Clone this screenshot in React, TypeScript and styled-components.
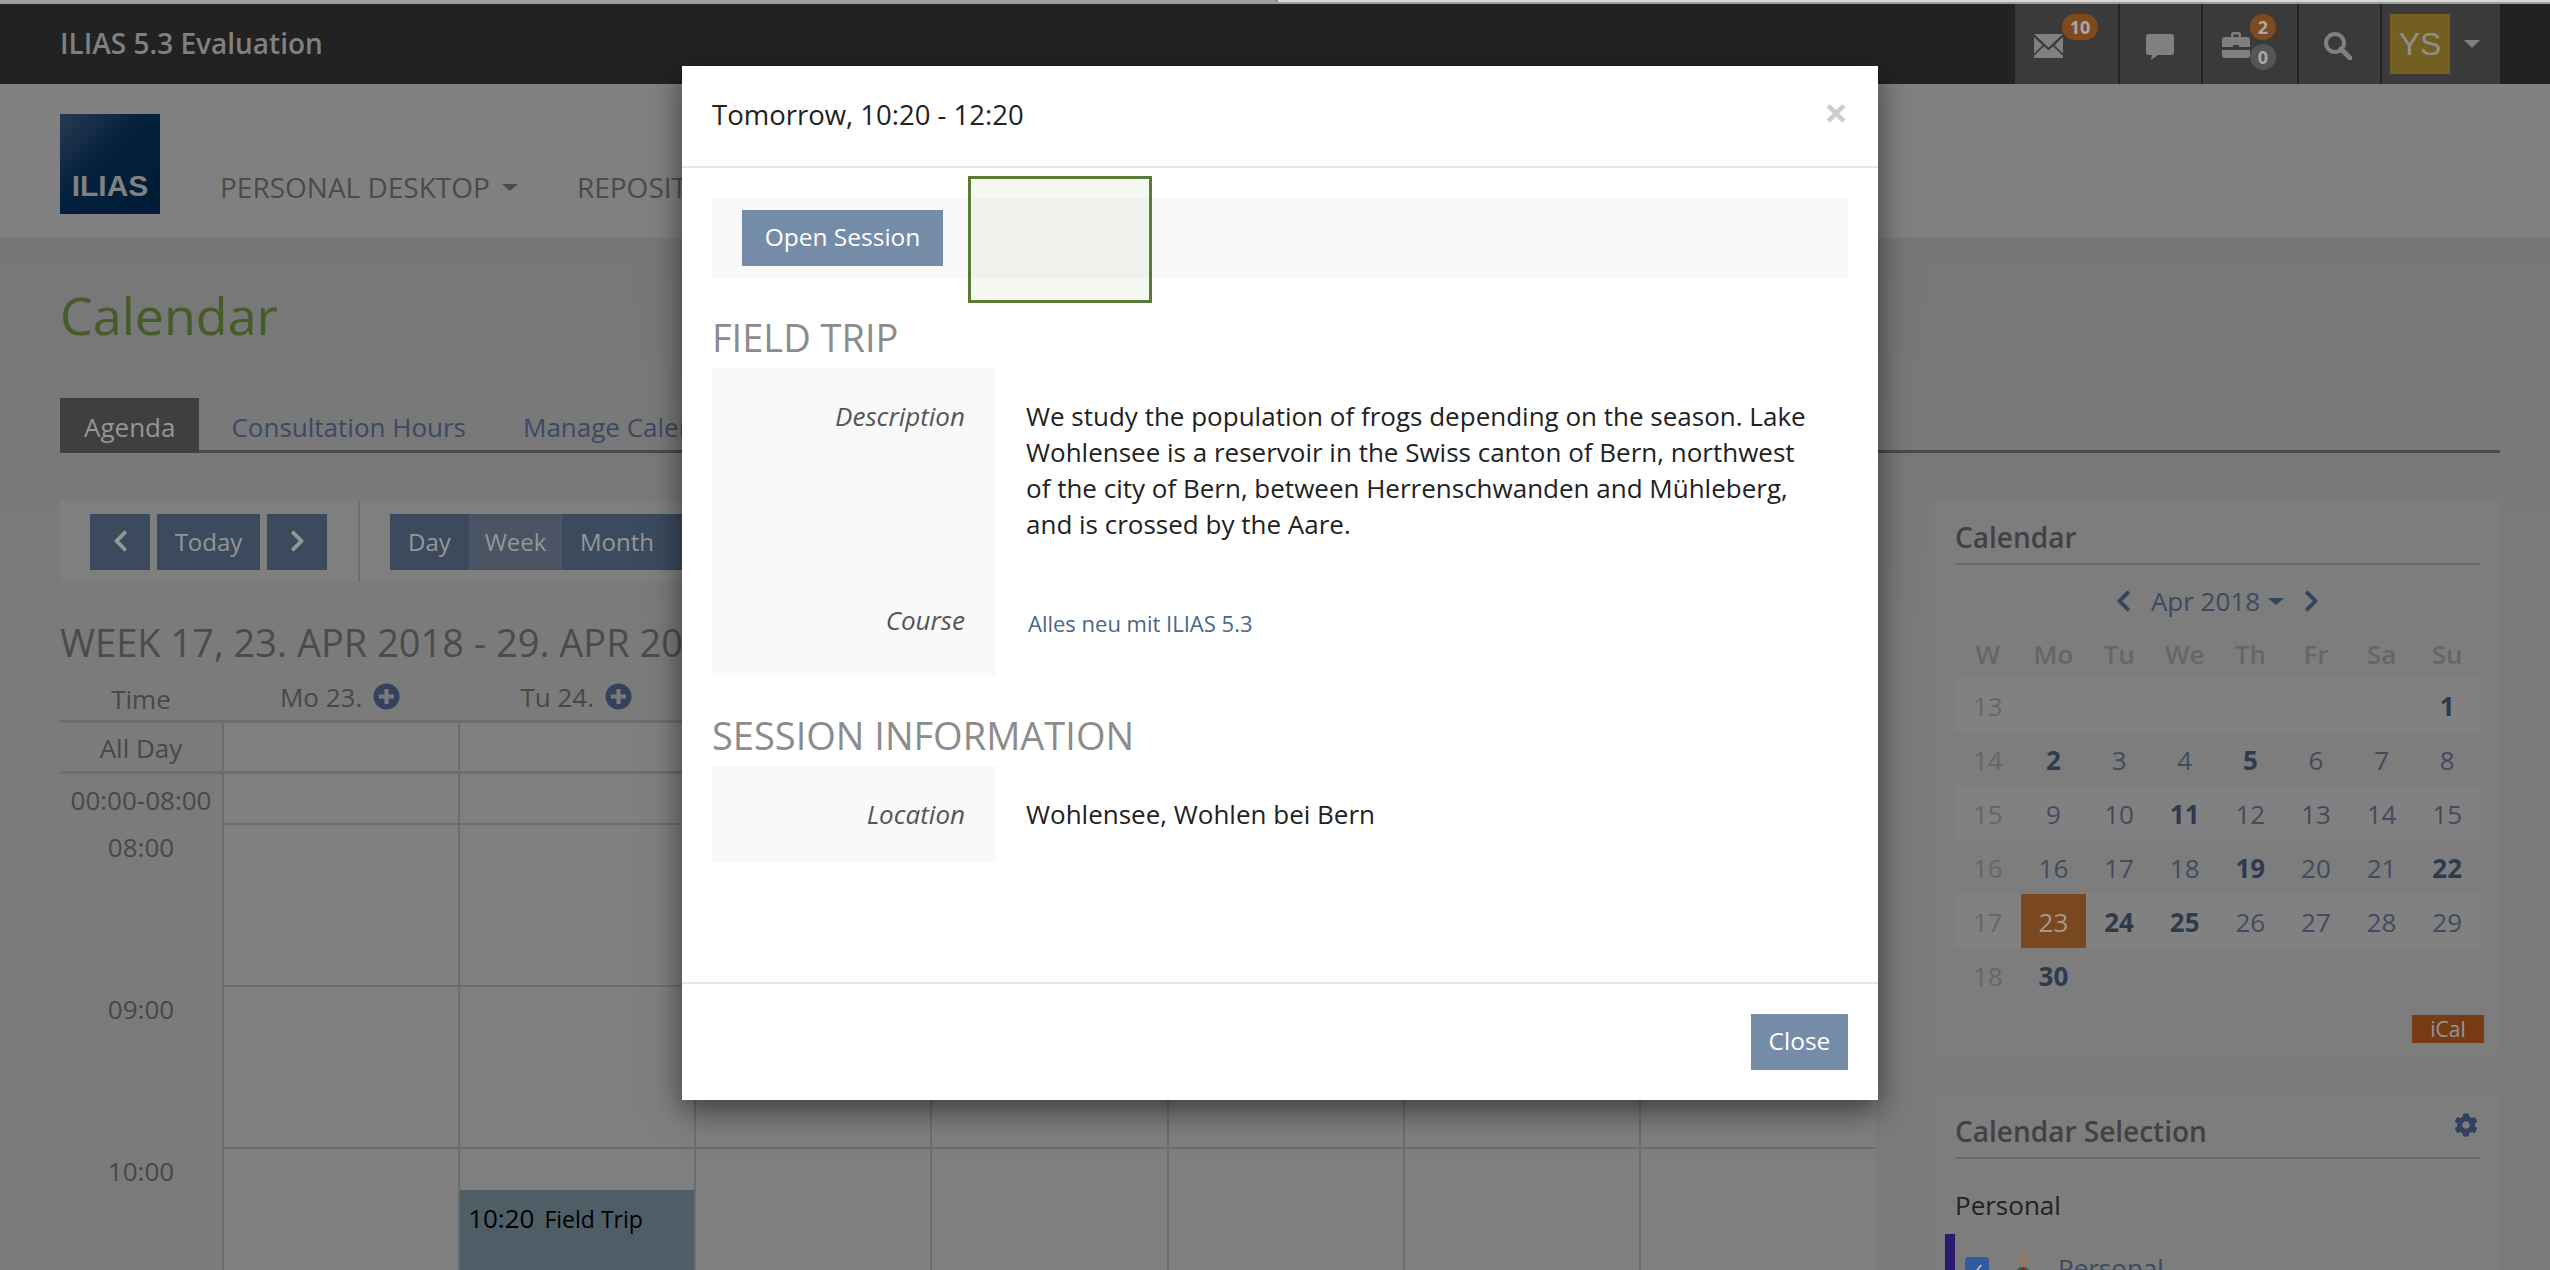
import styled, { createGlobalStyle } from "styled-components";
import { FaChevronLeft, FaChevronRight, FaCog, FaPlusCircle } from "react-icons/fa";

const GlobalStyle = createGlobalStyle`
  html, body {
    margin: 0;
    padding: 0;
    height: 1270px;
    overflow: hidden;
    background: #797979;
    font-family: "Open Sans", sans-serif;
    font-size: 26px;
    color: #444;
  }
  * { box-sizing: border-box; }
`;

const ChromeStrip = styled.div`
  display: flex;
  height: 4px;
  background: #a0a0a0;
  border-bottom: 2px solid #9c9c9c;
`;

const ChromeTab = styled.div`
  width: 1278px;
  border-right: 2px solid #8a8a8a;
`;

const ChromeRest = styled.div`
  flex: 1;
  background: #d8d8d8;
`;

const TopBar = styled.header`
  display: flex;
  justify-content: space-between;
  height: 80px;
  padding: 0 50px 0 60px;
  background: #222;
`;

const Brand = styled.div`
  font-size: 28px;
  font-weight: 600;
  line-height: 78px;
  color: #808080;
`;

const ToolGroup = styled.div`
  display: flex;
  background: #3a3a3a;
`;

const Tool = styled.div<{ $w: number }>`
  position: relative;
  display: flex;
  align-items: flex-start;
  justify-content: flex-start;
  width: ${(p) => p.$w}px;
  border-right: 2px solid #222;
  &:last-child {
    border-right: 0;
  }
`;

const ToolIcon = styled.svg<{ $x: number; $y: number }>`
  display: block;
  margin: ${(p) => p.$y}px 0 0 ${(p) => p.$x}px;
  fill: #808080;
`;

const Badge = styled.span<{ $x: number; $y: number; $w: number; $grey?: boolean }>`
  position: absolute;
  left: ${(p) => p.$x}px;
  top: ${(p) => p.$y}px;
  width: ${(p) => p.$w}px;
  height: 26px;
  border-radius: 13px;
  background: ${(p) => (p.$grey ? "#555" : "#7f4a20")};
  color: #a8a8a8;
  font-size: 18px;
  font-weight: 700;
  line-height: 26px;
  text-align: center;
`;

const Avatar = styled.div`
  width: 60px;
  height: 60px;
  margin: 10px 0 0 8px;
  background: #736020;
  color: #8f8f8f;
  font-family: "Liberation Sans", sans-serif;
  font-size: 32px;
  line-height: 60px;
  text-align: center;
`;

const AvatarCaret = styled.span`
  width: 0;
  height: 0;
  margin: 36px 0 0 14px;
  border-left: 8px solid transparent;
  border-right: 8px solid transparent;
  border-top: 8px solid #808080;
`;

const NavBar = styled.nav`
  display: flex;
  align-items: flex-start;
  height: 154px;
  padding: 30px 0 0 60px;
  background: #808080;
`;

const Logo = styled.div`
  display: flex;
  align-items: flex-end;
  justify-content: center;
  width: 100px;
  height: 100px;
  padding-bottom: 10px;
  background: linear-gradient(135deg, #283a52 0%, #03203c 45%, #001c36 100%);
  color: #808080;
  font-family: "Liberation Sans", sans-serif;
  font-size: 30px;
  font-weight: 700;
  line-height: 36px;
`;

const NavItem = styled.div`
  display: flex;
  align-items: center;
  margin: 54px 0 0 60px;
  color: #4b4b4b;
  font-size: 28px;
  line-height: 38px;
  white-space: nowrap;
  & + & {
    margin-left: 59px;
  }
`;

const Caret = styled.span<{ $color?: string }>`
  display: inline-block;
  width: 0;
  height: 0;
  margin-left: 12px;
  border-left: 8px solid transparent;
  border-right: 8px solid transparent;
  border-top: 7px solid ${(p) => p.$color || "#4b4b4b"};
`;

const Content = styled.main`
  height: 1032px;
  padding: 0 50px 0 60px;
  overflow: hidden;
  background: linear-gradient(#777 0, #7b7b7b 400px);
`;

const PageTitle = styled.h1`
  margin: 0;
  padding: 41px 0 47px;
  color: #465a2a;
  font-size: 52px;
  font-weight: 400;
  line-height: 72px;
`;

const Tabs = styled.div`
  display: flex;
  height: 55px;
  border-bottom: 3px solid #4a4a4a;
`;

const TabItem = styled.div<{ $active?: boolean }>`
  height: 55px;
  padding: ${(p) => (p.$active ? "0 24px" : "0 25px 0 32px")};
  background: ${(p) => (p.$active ? "#3f3f3f" : "transparent")};
  color: ${(p) => (p.$active ? "#969696" : "#3b4a62")};
  line-height: 58px;
  white-space: nowrap;
`;

const Columns = styled.div`
  display: flex;
  gap: 60px;
  margin-top: 48px;
`;

const LeftColumn = styled.div`
  width: 1815px;
  flex: none;
`;

const Toolbar = styled.div`
  display: flex;
  height: 81px;
  background: #7f7f7f;
`;

const ToolbarGroup = styled.div<{ $gap: number; $w?: number }>`
  display: flex;
  gap: ${(p) => p.$gap}px;
  width: ${(p) => (p.$w ? `${p.$w}px` : "auto")};
  padding: 13px 30px;
  & + & {
    border-left: 2px solid #6f6f6f;
  }
`;

const DimButton = styled.div<{ $w: number; $active?: boolean }>`
  display: flex;
  align-items: center;
  justify-content: center;
  width: ${(p) => p.$w}px;
  height: 56px;
  padding-bottom: 2px;
  background: ${(p) => (p.$active ? "#4a5464" : "#3c4a5e")};
  color: #969696;
  font-size: 24px;
  svg {
    width: 15px;
    height: 24px;
  }
`;

const WeekTitle = styled.h2`
  margin: 35px 0 0;
  color: #4b4b4b;
  font-size: 38px;
  font-weight: 400;
  line-height: 50px;
  white-space: nowrap;
`;

const WeekRow = styled.div<{ $h: number }>`
  display: grid;
  grid-template-columns: 162px repeat(7, 1fr);
  height: ${(p) => p.$h}px;
`;

const TimeCell = styled.div<{ $line?: number; $top?: number }>`
  padding-top: ${(p) => p.$top || 0}px;
  border-bottom: ${(p) => p.$line || 0}px solid #6d6d6d;
  color: #484848;
  line-height: 36px;
  text-align: center;
`;

const DayHead = styled(TimeCell)`
  display: flex;
  justify-content: center;
  gap: 11px;
  color: #484848;
  svg {
    width: 27px;
    height: 27px;
    margin-top: 4px;
    color: #33435c;
  }
`;

const DayCell = styled.div<{ $line?: number }>`
  border-left: 2px solid #6d6d6d;
  border-bottom: ${(p) => p.$line || 0}px solid #6d6d6d;
  background: #7f7f7f;
`;

const CalEvent = styled.div`
  display: flex;
  align-items: baseline;
  gap: 10px;
  height: 80px;
  margin-top: 41px;
  padding: 10px 8px;
  background: #4f5d66;
  color: #000;
  font-size: 26px;
  line-height: 36px;
  span {
    font-size: 23px;
  }
`;

const SideColumn = styled.aside`
  flex: 1;
  padding-top: 1px;
`;

const SidePanel = styled.section<{ $h: number }>`
  height: ${(p) => p.$h}px;
  margin-bottom: 41px;
  padding: 11px 20px 0;
  background: #7d7d7d;
`;

const SideHeading = styled.div`
  position: relative;
  height: 52px;
  border-bottom: 2px solid #6a6a6a;
  color: #424242;
  font-size: 28px;
  font-weight: 600;
  line-height: 48px;
  svg {
    position: absolute;
    right: 2px;
    top: 6px;
    width: 24px;
    height: 24px;
    color: #2f4060;
  }
`;

const MonthNav = styled.div`
  display: flex;
  align-items: center;
  justify-content: center;
  gap: 20px;
  height: 72px;
  color: #3b4a62;
  svg {
    width: 15px;
    height: 24px;
    color: #33435c;
  }
`;

const MonthLabel = styled.span`
  display: flex;
  align-items: center;
  span {
    margin-left: 8px;
    border-top-color: #33435c;
  }
`;

const MonthGrid = styled.div`
  display: grid;
  grid-template-columns: repeat(8, 1fr);
  text-align: center;
`;

const WeekdayCell = styled.div`
  height: 42px;
  margin-top: -1px;
  color: #666;
  font-weight: 600;
  line-height: 36px;
`;

const DateCell = styled.div<{ $stripe?: boolean; $week?: boolean; $bold?: boolean; $today?: boolean }>`
  height: 54px;
  background: ${(p) => (p.$today ? "#7a4820" : p.$stripe ? "#818181" : "transparent")};
  color: ${(p) => (p.$today ? "#a8978a" : p.$week ? "#666" : p.$bold ? "#2e3a4e" : "#414c5e")};
  font-weight: ${(p) => (p.$bold ? 700 : 400)};
  line-height: 56px;
`;

const ICalRow = styled.div`
  display: flex;
  justify-content: flex-end;
  margin: 13px -4px 0 0;
`;

const ICalButton = styled.div`
  width: 72px;
  height: 28px;
  background: #773c15;
  color: #969696;
  font-size: 21px;
  line-height: 28px;
  text-align: center;
`;

const GroupTitle = styled.div`
  margin-top: 28px;
  color: #222;
  line-height: 36px;
`;

const SelectionRow = styled.div`
  display: flex;
  align-items: flex-start;
  height: 60px;
  margin: 11px 0 0 -10px;
  border-left: 10px solid #2b1a6e;
  padding: 23px 0 0 10px;
`;

const CheckBox = styled.span`
  display: flex;
  align-items: center;
  justify-content: center;
  width: 24px;
  height: 24px;
  border-radius: 4px;
  background: #2f5c9e;
  color: #c8c8c8;
  font-size: 18px;
`;

const PersonIcon = styled.svg`
  margin-left: 22px;
  margin-top: -4px;
`;

const SelectionLabel = styled.span`
  margin: -7px 0 0 23px;
  color: #3b4a62;
`;

const Modal = styled.div`
  position: absolute;
  left: 682px;
  top: 66px;
  display: flex;
  flex-direction: column;
  width: 1196px;
  height: 1034px;
  background: #fff;
  color: #222;
  box-shadow: 0 10px 30px rgba(0, 0, 0, 0.55);
`;

const ModalHeader = styled.div`
  display: flex;
  justify-content: space-between;
  height: 102px;
  padding: 30px 30px 0;
  border-bottom: 2px solid #e5e5e5;
  font-size: 27.500px;
  line-height: 38px;
`;

const CloseX = styled.span`
  margin-top: -9px;
  color: #ccc;
  font-size: 42px;
  font-weight: 700;
  line-height: 50px;
`;

const ModalBody = styled.div`
  flex: 1;
  padding: 30px 30px 0;
`;

const ActionBar = styled.div`
  position: relative;
  height: 80px;
  padding: 12px 30px;
  background: #f9f9f9;
`;

const PrimaryButton = styled.button<{ $w: number }>`
  display: block;
  width: ${(p) => p.$w}px;
  height: 56px;
  padding: 0 0 4px;
  border: 0;
  background: #758ca9;
  color: #fff;
  font-family: inherit;
  font-size: 24.500px;
`;

const Highlight = styled.div`
  position: absolute;
  left: 256px;
  top: -22px;
  width: 184px;
  height: 127px;
  border: 3px solid #5a7a37;
  background: rgba(110, 170, 70, 0.08);
`;

const SectionTitle = styled.h3<{ $top?: number }>`
  margin: 0;
  padding: ${(p) => p.$top || 35}px 0 7px;
  color: #8c8c8c;
  font-size: 38px;
  font-weight: 400;
  line-height: 48px;
`;

const PropRow = styled.div<{ $h: number }>`
  display: grid;
  grid-template-columns: 284px 1fr;
  min-height: ${(p) => p.$h}px;
`;

const PropLabel = styled.div`
  padding: 30px 31px 0 0;
  background: #f9f9f9;
  color: #555;
  font-size: 26px;
  font-style: italic;
  line-height: 36px;
  text-align: right;
`;

const PropValue = styled.div`
  padding: 30px 30px 0;
  font-size: 26px;
  line-height: 36px;
`;

const PropLink = styled.a`
  display: inline-block;
  margin: 3px 0 0 2px;
  color: #4c6586;
  font-size: 22px;
`;

const ModalFooter = styled.div`
  display: flex;
  justify-content: flex-end;
  height: 118px;
  padding: 30px 30px 0;
  border-top: 2px solid #e5e5e5;
`;

const DAY_HEADS = ["Mo 23.", "Tu 24.", "We 25.", "Th 26.", "Fr 27.", "Sa 28.", "Su 29."];
const DAYS = [0, 1, 2, 3, 4, 5, 6];
const WEEKDAYS = ["W", "Mo", "Tu", "We", "Th", "Fr", "Sa", "Su"];
const MONTH = [
  ["13", "", "", "", "", "", "", "1"],
  ["14", "2", "3", "4", "5", "6", "7", "8"],
  ["15", "9", "10", "11", "12", "13", "14", "15"],
  ["16", "16", "17", "18", "19", "20", "21", "22"],
  ["17", "23", "24", "25", "26", "27", "28", "29"],
  ["18", "30", "", "", "", "", "", ""],
];
const BOLD_DAYS = ["1", "2", "5", "11", "19", "22", "24", "25", "30"];

const EnvelopeIcon = () => (
  <ToolIcon $x={19} $y={30} width="29" height="24" viewBox="0 0 29 24">
    <path d="M0 0h29L14.5 13.5 11 10.2z" />
    <path d="M0 3l8.5 8.3L0 19.5z" />
    <path d="M29 3l-8.5 8.3L29 19.5z" />
    <path d="M0 24v-2.300l10-9.500 4.500 4.300 4.500-4.300 10 9.500V24z" />
  </ToolIcon>
);

const CommentIcon = () => (
  <ToolIcon $x={26} $y={30} width="28" height="26" viewBox="0 0 28 26">
    <path d="M3 0h22a3 3 0 0 1 3 3v15a3 3 0 0 1-3 3H12l-7 5 1-5H3a3 3 0 0 1-3-3V3a3 3 0 0 1 3-3z" />
  </ToolIcon>
);

const BriefcaseIcon = () => (
  <ToolIcon $x={19} $y={28} width="28" height="26" viewBox="0 0 28 26">
    <path d="M9 5V2.500A2.500 2.500 0 0 1 11.500 0h5A2.500 2.500 0 0 1 19 2.500V5h6a3 3 0 0 1 3 3v7H17v-2h-6v2H0V8a3 3 0 0 1 3-3zm2.500 0h5V2.500h-5z" />
    <path d="M0 18h28v5a3 3 0 0 1-3 3H3a3 3 0 0 1-3-3z" />
  </ToolIcon>
);

const SearchIcon = () => (
  <ToolIcon $x={25} $y={28} width="28" height="28" viewBox="0 0 28 28">
    <circle cx="11" cy="11" r="9" fill="none" stroke="#808080" strokeWidth="4" />
    <path d="M17 17l9 9" stroke="#808080" strokeWidth="5" strokeLinecap="round" />
  </ToolIcon>
);

const App = () => {
  return (
    <>
      <GlobalStyle />
      <ChromeStrip>
        <ChromeTab />
        <ChromeRest />
      </ChromeStrip>
      <TopBar>
        <Brand>ILIAS 5.3 Evaluation</Brand>
        <ToolGroup>
          <Tool $w={105}>
            <EnvelopeIcon />
            <Badge $x={47} $y={10} $w={36}>10</Badge>
          </Tool>
          <Tool $w={83}>
            <CommentIcon />
          </Tool>
          <Tool $w={96}>
            <BriefcaseIcon />
            <Badge $x={47} $y={10} $w={26}>2</Badge>
            <Badge $x={47} $y={40} $w={26} $grey>0</Badge>
          </Tool>
          <Tool $w={83}>
            <SearchIcon />
          </Tool>
          <Tool $w={118}>
            <Avatar>YS</Avatar>
            <AvatarCaret />
          </Tool>
        </ToolGroup>
      </TopBar>
      <NavBar>
        <Logo>ILIAS</Logo>
        <NavItem>
          PERSONAL DESKTOP
          <Caret />
        </NavItem>
        <NavItem>REPOSITORY</NavItem>
      </NavBar>
      <Content>
        <PageTitle>Calendar</PageTitle>
        <Tabs>
          <TabItem $active>Agenda</TabItem>
          <TabItem>Consultation Hours</TabItem>
          <TabItem>Manage Calendars</TabItem>
        </Tabs>
        <Columns>
          <LeftColumn>
            <Toolbar>
              <ToolbarGroup $gap={7} $w={298}>
                <DimButton $w={60}><FaChevronLeft /></DimButton>
                <DimButton $w={103}>Today</DimButton>
                <DimButton $w={60}><FaChevronRight /></DimButton>
              </ToolbarGroup>
              <ToolbarGroup $gap={0}>
                <DimButton $w={79}>Day</DimButton>
                <DimButton $w={93} $active>Week</DimButton>
                <DimButton $w={110}>Month</DimButton>
                <DimButton $w={80}>List</DimButton>
              </ToolbarGroup>
            </Toolbar>
            <WeekTitle>WEEK 17, 23. APR 2018 - 29. APR 2018</WeekTitle>
            <WeekRow $h={56}>
              <TimeCell $line={3} $top={14}>Time</TimeCell>
              {DAY_HEADS.map((d) => (
                <DayHead key={d} $line={3} $top={12}>
                  {d} <FaPlusCircle />
                </DayHead>
              ))}
            </WeekRow>
            <WeekRow $h={51}>
              <TimeCell $line={3} $top={7}>All Day</TimeCell>
              {DAYS.map((d) => <DayCell key={d} $line={3} />)}
            </WeekRow>
            <WeekRow $h={51}>
              <TimeCell $top={8}>00:00-08:00</TimeCell>
              {DAYS.map((d) => <DayCell key={d} $line={2} />)}
            </WeekRow>
            {["08:00", "09:00"].map((t) => (
              <WeekRow key={t} $h={162}>
                <TimeCell $top={4}>{t}</TimeCell>
                {DAYS.map((d) => <DayCell key={d} $line={2} />)}
              </WeekRow>
            ))}
            <WeekRow $h={121}>
              <TimeCell $top={4}>10:00</TimeCell>
              {DAYS.map((d) => (
                <DayCell key={d}>
                  {d === 1 && (
                    <CalEvent>
                      10:20 <span>Field Trip</span>
                    </CalEvent>
                  )}
                </DayCell>
              ))}
            </WeekRow>
          </LeftColumn>
          <SideColumn>
            <SidePanel $h={553}>
              <SideHeading>Calendar</SideHeading>
              <MonthNav>
                <FaChevronLeft />
                <MonthLabel>
                  Apr 2018
                  <Caret />
                </MonthLabel>
                <FaChevronRight />
              </MonthNav>
              <MonthGrid>
                {WEEKDAYS.map((w) => <WeekdayCell key={w}>{w}</WeekdayCell>)}
                {MONTH.map((week, i) =>
                  week.map((d, j) => (
                    <DateCell
                      key={`${i}-${j}`}
                      $stripe={i % 2 === 0}
                      $week={j === 0}
                      $bold={j > 0 && BOLD_DAYS.includes(d)}
                      $today={j > 0 && d === "23"}
                    >
                      {d}
                    </DateCell>
                  ))
                )}
              </MonthGrid>
              <ICalRow>
                <ICalButton>iCal</ICalButton>
              </ICalRow>
            </SidePanel>
            <SidePanel $h={174}>
              <SideHeading>
                Calendar Selection
                <FaCog />
              </SideHeading>
              <GroupTitle>Personal</GroupTitle>
              <SelectionRow>
                <CheckBox>✓</CheckBox>
                <PersonIcon width="24" height="30" viewBox="0 0 24 30">
                  <circle cx="12" cy="6.500" r="6.500" fill="#8f7a6a" />
                  <path d="M4 30v-8a8 8 0 0 1 16 0v8z" fill="#3f5a3a" />
                  <path d="M10.500 15h3l-.5 9h-2z" fill="#7a2a20" />
                </PersonIcon>
                <SelectionLabel>Personal</SelectionLabel>
              </SelectionRow>
            </SidePanel>
          </SideColumn>
        </Columns>
      </Content>
      <Modal>
        <ModalHeader>
          Tomorrow, 10:20 - 12:20
          <CloseX>×</CloseX>
        </ModalHeader>
        <ModalBody>
          <ActionBar>
            <PrimaryButton $w={201}>Open Session</PrimaryButton>
            <Highlight />
          </ActionBar>
          <SectionTitle>FIELD TRIP</SectionTitle>
          <PropRow $h={204}>
            <PropLabel>Description</PropLabel>
            <PropValue>
              We study the population of frogs depending on the season. Lake Wohlensee is a reservoir in the Swiss canton of Bern, northwest of the city of Bern, between Herrenschwanden and Mühleberg, and is crossed by the Aare.
            </PropValue>
          </PropRow>
          <PropRow $h={103}>
            <PropLabel>Course</PropLabel>
            <PropValue>
              <PropLink>Alles neu mit ILIAS 5.3</PropLink>
            </PropValue>
          </PropRow>
          <SectionTitle $top={36}>SESSION INFORMATION</SectionTitle>
          <PropRow $h={96}>
            <PropLabel>Location</PropLabel>
            <PropValue>Wohlensee, Wohlen bei Bern</PropValue>
          </PropRow>
        </ModalBody>
        <ModalFooter>
          <PrimaryButton $w={97}>Close</PrimaryButton>
        </ModalFooter>
      </Modal>
    </>
  );
};

export default App;
